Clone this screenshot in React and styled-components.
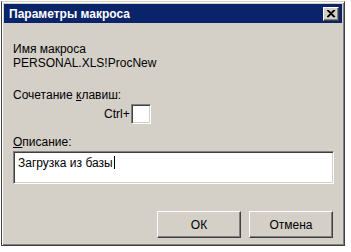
import React from "react";
import styled, { createGlobalStyle } from "styled-components";

const Global = createGlobalStyle`
  html, body { margin: 0; padding: 0; background: #ffffff; }
  body { font-family: "Liberation Sans", Arial, sans-serif; font-size: 12px; color: #000; }
`;

const Window = styled.div`
  box-sizing: border-box;
  margin: 1px 0 0 1px;
  width: 344px;
  height: 245px;
  background: #d4d0c8;
  border: 1px solid #404040;
  border-top-color: #d4d0c8;
  border-left-color: #404040;
  box-shadow: inset 1px 1px #ffffff, inset -1px -1px #808080;
  padding: 2px;
  display: flex;
  flex-direction: column;
`;

const TitleBar = styled.div`
  height: 19px;
  background: #0a246a;
  color: #ffffff;
  font-weight: bold;
  font-size: 12px;
  display: flex;
  align-items: center;
  justify-content: space-between;
  padding: 0 3px 0 5px;
`;

const CloseButton = styled.div`
  box-sizing: border-box;
  width: 16px;
  height: 14px;
  background: #d4d0c8;
  border: 1px solid;
  border-color: #ffffff #404040 #404040 #ffffff;
  box-shadow: inset -1px -1px #808080;
  display: flex;
  align-items: center;
  justify-content: center;
`;

const Body = styled.div`
  flex: 1;
  display: flex;
  flex-direction: column;
  padding: 19px 8px 0 9px;
`;

const Label = styled.div`
  line-height: 14px;
  margin-top: ${(p) => p.$mt || 0}px;
`;

const U = styled.span`
  text-decoration: underline;
`;

const KeyRow = styled.div`
  display: flex;
  align-items: center;
  margin: 2px 0 0 91px;
`;

const Sunken = styled.div`
  box-sizing: border-box;
  background: #ffffff;
  border: 1px solid;
  border-color: #808080 #ffffff #ffffff #808080;
  box-shadow: inset 1px 1px #404040, inset -1px -1px #d4d0c8;
`;

const KeyBox = styled(Sunken)`
  width: 20px;
  height: 20px;
  margin-left: 1px;
`;

const TextBox = styled(Sunken)`
  width: 321px;
  height: 33px;
  margin-top: 2px;
  padding: 4px 4px;
  line-height: 14px;
  display: flex;
  align-items: flex-start;
`;

const Caret = styled.span`
  display: inline-block;
  width: 1px;
  height: 13px;
  background: #000;
  margin-left: 1px;
`;

const Buttons = styled.div`
  display: flex;
  justify-content: flex-end;
  gap: 8px;
  margin-top: 27px;
  padding-right: 1px;
`;

const Button = styled.div`
  box-sizing: border-box;
  width: 84px;
  height: 27px;
  background: #d4d0c8;
  border: 1px solid;
  border-color: #ffffff #404040 #404040 #ffffff;
  box-shadow: inset -1px -1px #808080;
  display: flex;
  align-items: center;
  justify-content: center;
`;

export default function App() {
  return (
    <>
      <Global />
      <Window>
        <TitleBar>
          <span>Параметры макроса</span>
          <CloseButton>
            <svg width="9" height="8" viewBox="0 0 9 8">
              <path d="M1 0 L8 7 M8 0 L1 7 M0 0 L7 7 M7 0 L0 7" stroke="#000" strokeWidth="1.2" />
            </svg>
          </CloseButton>
        </TitleBar>
        <Body>
          <Label>Имя макроса</Label>
          <Label>PERSONAL.XLS!ProcNew</Label>
          <Label $mt={18}>
            Сочетание <U>к</U>лавиш:
          </Label>
          <KeyRow>
            <span>Ctrl+</span>
            <KeyBox />
          </KeyRow>
          <Label $mt={11}>
            <U>О</U>писание:
          </Label>
          <TextBox>
            <span>Загрузка из базы</span>
            <Caret />
          </TextBox>
          <Buttons>
            <Button>ОК</Button>
            <Button>Отмена</Button>
          </Buttons>
        </Body>
      </Window>
    </>
  );
}
